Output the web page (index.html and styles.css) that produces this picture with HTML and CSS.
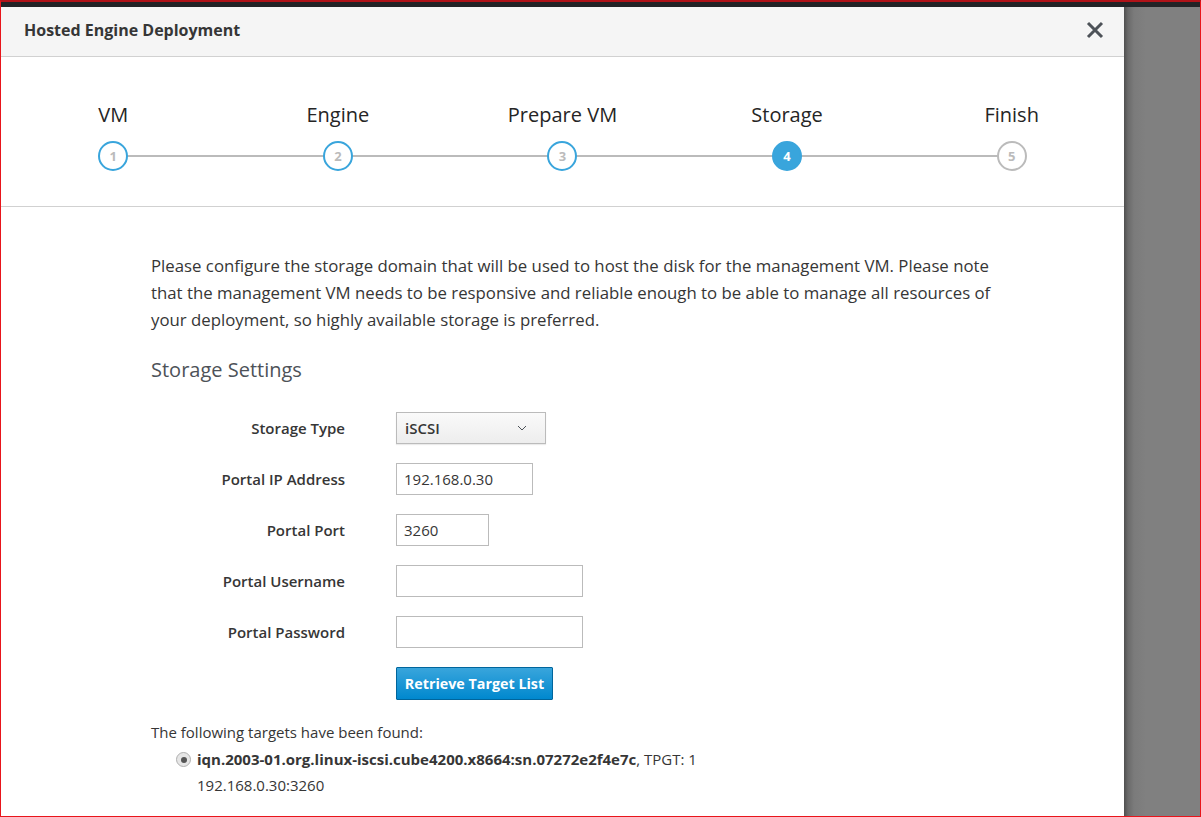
FILE: index.html
```html
<!DOCTYPE html>
<html>
<head>
<meta charset="utf-8">
<link rel="stylesheet" href="styles.css">
</head>
<body>
<div class="frame">
  <div class="topbar"></div>
  <div class="main">
    <div class="modal">
      <div class="modal-header">
        <h1 class="modal-title">Hosted Engine Deployment</h1>
        <button class="close" aria-label="Close">
          <svg width="18" height="18" viewBox="0 0 18 18"><path d="M2 2 L16 16 M16 2 L2 16" stroke="#4d5258" stroke-width="3" stroke-linecap="butt" fill="none"/></svg>
        </button>
      </div>
      <div class="steps">
        <div class="step done"><div class="step-label">VM</div><div class="step-circle">1</div></div>
        <div class="step done"><div class="step-label">Engine</div><div class="step-circle">2</div></div>
        <div class="step done"><div class="step-label">Prepare VM</div><div class="step-circle">3</div></div>
        <div class="step active"><div class="step-label">Storage</div><div class="step-circle">4</div></div>
        <div class="step todo"><div class="step-label">Finish</div><div class="step-circle">5</div></div>
      </div>
      <div class="modal-body">
        <p class="intro">Please configure the storage domain that will be used to host the disk for the management VM. Please note that the management VM needs to be responsive and reliable enough to be able to manage all resources of your deployment, so highly available storage is preferred.</p>
        <h2 class="section-title">Storage Settings</h2>
        <div class="form">
          <label class="form-label">Storage Type</label>
          <div class="form-field"><div class="dropdown"><span>iSCSI</span><svg class="chev" width="10" height="6" viewBox="0 0 10 6"><path d="M1 1 L5 5 L9 1" stroke="#4d5258" stroke-width="1" fill="none"/></svg></div></div>
          <label class="form-label">Portal IP Address</label>
          <div class="form-field"><div class="input w-ip">192.168.0.30</div></div>
          <label class="form-label">Portal Port</label>
          <div class="form-field"><div class="input w-port">3260</div></div>
          <label class="form-label">Portal Username</label>
          <div class="form-field"><div class="input w-user"></div></div>
          <label class="form-label">Portal Password</label>
          <div class="form-field"><div class="input w-user"></div></div>
          <div></div>
          <div class="form-field"><button class="btn-primary">Retrieve Target List</button></div>
        </div>
        <div class="targets">
          <div class="targets-title">The following targets have been found:</div>
          <div class="target">
            <span class="radio"><span class="dot"></span></span>
            <div class="target-text">
              <div><b>iqn.2003-01.org.linux-iscsi.cube4200.x8664:sn.07272e2f4e7c</b>, TPGT: 1</div>
              <div>192.168.0.30:3260</div>
            </div>
          </div>
        </div>
      </div>
    </div>
    <div class="backdrop"></div>
  </div>
</div>
</body>
</html>
```
FILE: styles.css
```css
html, body {
  margin: 0;
  padding: 0;
  overflow: hidden;
}
body {
  font-family: "Open Sans", "Noto Sans", sans-serif;
  color: #363636;
}
.frame {
  width: 1201px;
  height: 817px;
  box-sizing: border-box;
  border: 1px solid #e8151b;
  border-top: 2px solid #b01218;
  display: flex;
  flex-direction: column;
  background: #808080;
}
.topbar {
  height: 5px;
  background: #222326;
  flex: none;
}
.main {
  flex: 1;
  display: flex;
  min-height: 0;
}
.modal {
  width: 1123px;
  flex: none;
  background: #fff;
  display: flex;
  flex-direction: column;
}
.modal-header {
  height: 49px;
  border-bottom: 1px solid #d1d1d1;
  background: #f5f5f5;
  display: flex;
  align-items: center;
  justify-content: space-between;
  padding: 0 20px 0 23px;
}
.modal-title {
  margin: 0;
  font-size: 16px;
  font-weight: 700;
  color: #363636;
  position: relative;
  top: -2px;
}
.close {
  border: 0;
  background: none;
  padding: 0;
  width: 18px;
  height: 18px;
  position: relative;
  top: -2px;
}
.close svg { display: block; }
.steps {
  display: flex;
  border-bottom: 1px solid #d1d1d1;
  padding: 46px 0 35px;
}
.step {
  flex: 1;
  display: flex;
  flex-direction: column;
  align-items: center;
  position: relative;
}
.step-label {
  font-size: 20px;
  line-height: 24px;
  color: #252525;
  margin-bottom: 14px;
}
.step-circle {
  width: 26px;
  height: 26px;
  border-radius: 50%;
  border: 2px solid #39a5dc;
  background: #fff;
  color: #bbb;
  font-size: 13px;
  font-weight: 700;
  display: flex;
  align-items: center;
  justify-content: center;
  position: relative;
  z-index: 1;
  line-height: 1;
}
.step:not(:last-child)::after {
  content: "";
  position: absolute;
  left: 50%;
  width: 100%;
  top: 52px;
  height: 2px;
  background: #bbb;
}
.step.active .step-circle {
  background: #39a5dc;
  color: #fff;
}
.step.todo .step-circle {
  border-color: #bbb;
}
.modal-body {
  padding: 45px 0 0 150px;
  width: 862px;
}
.intro {
  margin: 0;
  font-size: 16.8px;
  line-height: 27px;
  color: #363636;
}
.section-title {
  margin: 23px 0 0;
  font-size: 20px;
  line-height: 28px;
  font-weight: 400;
  color: #4d5258;
}
.form {
  margin-top: 28px;
  display: grid;
  grid-template-columns: 194px 1fr;
  column-gap: 51px;
  row-gap: 19px;
  align-items: center;
}
.form-label {
  text-align: right;
  font-size: 15px;
  font-weight: 600;
  color: #363636;
}
.form-field {
  display: flex;
}
.dropdown {
  width: 122px;
  height: 30px;
  border: 1px solid #bbb;
  background: linear-gradient(#fafafa, #ededed);
  box-shadow: 0 1px 1px rgba(3,3,3,0.08);
  display: flex;
  align-items: center;
  justify-content: space-between;
  padding: 0 18px 0 8px;
  box-sizing: content-box;
  font-size: 15px;
  font-weight: 600;
  color: #363636;
}
.chev { display: block; }
.input {
  border: 1px solid #bbb;
  box-sizing: border-box;
  height: 32px;
  padding: 0 7px;
  font-size: 15px;
  line-height: 30px;
  color: #363636;
}
.w-ip { width: 137px; }
.w-port { width: 93px; }
.w-user { width: 187px; }
.btn-primary {
  width: 157px;
  height: 33px;
  border: 1px solid #00659c;
  background: linear-gradient(#39a5dc, #0088ce);
  color: #fff;
  font-family: "Open Sans", "Noto Sans", sans-serif;
  font-size: 14.3px;
  font-weight: 700;
  padding: 0;
  border-radius: 1px;
}
.targets {
  margin-top: 22px;
  font-size: 15px;
  color: #363636;
}
.targets-title {
  line-height: 20px;
}
.target {
  display: flex;
  align-items: flex-start;
  margin-top: 4px;
  padding-left: 25px;
}
.radio {
  width: 13px;
  height: 13px;
  border-radius: 50%;
  border: 1px solid #b0b0b0;
  background: #e6e6e6;
  display: flex;
  align-items: center;
  justify-content: center;
  margin-top: 6px;
  margin-right: 6px;
  flex: none;
}
.dot {
  width: 6px;
  height: 6px;
  border-radius: 50%;
  background: #555;
}
.target-text {
  line-height: 26px;
}
.target-text b { font-weight: 700; }
.backdrop {
  flex: 1;
  background: linear-gradient(to right, #4f4f4f 0, #6a6a6a 4px, #7b7b7b 10px, #808080 22px);
}
```
